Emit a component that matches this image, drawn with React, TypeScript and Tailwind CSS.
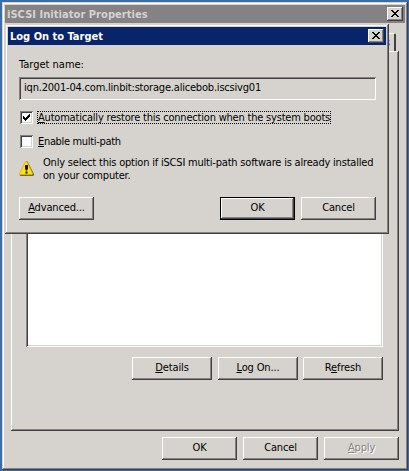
import type { ReactNode } from 'react';

const RAISED =
  'shadow-[inset_-1px_-1px_0_#424142,inset_1px_1px_0_#ffffff,inset_-2px_-2px_0_#848284]';
const FRAME =
  'shadow-[inset_-1px_-1px_0_#424142,inset_1px_1px_0_#d6d3ce,inset_-2px_-2px_0_#848284,inset_2px_2px_0_#ffffff]';
const SUNKEN =
  'shadow-[inset_1px_1px_0_#848284,inset_-1px_-1px_0_#ffffff,inset_2px_2px_0_#424142,inset_-2px_-2px_0_#d6d3ce]';

function Button({ children, className = '' }: { children: ReactNode; className?: string }) {
  return (
    <button className={`h-[23px] shrink-0 bg-[#d6d3ce] pb-px text-center leading-[20px] tracking-[-0.15px] ${RAISED} ${className}`}>
      {children}
    </button>
  );
}

function Close() {
  return (
    <button className={`flex h-[14px] w-4 items-start justify-center bg-[#d6d3ce] pt-[3px] ${RAISED}`} aria-label="Close">
      <svg width="8" height="7" viewBox="0 0 8 7" shapeRendering="crispEdges">
        <path d="M0 0h2v1h1v1h2V1h1V0h2v1H7v1H6v1H5v1h1v1h1v1h1v1H6V6H5V5H3v1H2v1H0V6h1V5h1V4h1V3H2V2H1V1H0z" fill="#000" />
      </svg>
    </button>
  );
}

function Checkbox({ checked = false }: { checked?: boolean }) {
  return (
    <span className={`block h-[13px] w-[13px] shrink-0 bg-white p-[3px] ${SUNKEN}`}>
      {checked && (
        <svg width="7" height="7" viewBox="0 0 7 7" shapeRendering="crispEdges" className="block">
          <path d="M0 2h1v1h1v1h1V3h1V2h1V1h1V0h1v3H6v1H5v1H4v1H3v1H2V6H1V5H0z" fill="#000" />
        </svg>
      )}
    </span>
  );
}

function Warning() {
  return (
    <svg width="15" height="15" viewBox="0 0 15 15" className="block">
      <path d="M7 .3h1.5L15 13v1.2l-.8.8H1.5L.5 14z" fill="#756b31" />
      <path d="M6.6.6h1.2L13.6 12.6l-.7.9H1.1l-.6-.9z" fill="#ffe600" stroke="#dfad00" strokeWidth=".7" />
      <path d="M6 4h3v3.5L8.2 9.5H6.8L6 7.5zM6.5 10.5h2v2h-2z" fill="#111052" />
    </svg>
  );
}

export default function App() {
  return (
    <div className="relative h-[471px] w-[409px] overflow-hidden bg-[#3a6ea5] pl-0.5 pt-0.5 font-['DejaVu_Sans_Condensed','DejaVu_Sans',sans-serif] text-[11px] leading-[13px] text-black">
      <div className={`flex h-[468px] w-[406px] flex-col bg-[#d6d3ce] p-[3px] ${FRAME}`}>
        <div className="flex h-[18px] shrink-0 items-center justify-between bg-[#848284] pl-0.5 pr-0.5 font-bold text-[#d6d3ce]">
          <span className="whitespace-nowrap tracking-[0.05px]">iSCSI Initiator Properties</span>
          <Close />
        </div>
        <div className="flex h-7 shrink-0 justify-end pr-[9px] pt-2.5">
          <div className="flex h-[18px] w-20 items-center justify-end rounded-t-[2px] border-r-2 border-t border-r-[#424142] border-t-white pr-1">s</div>
        </div>
        <div className={`ml-1.5 flex h-[380px] w-[388px] shrink-0 flex-col pl-[15px] pr-4 ${RAISED}`}>
          <div className={`h-[296px] shrink-0 bg-white ${SUNKEN}`} />
          <div className="mt-2.5 flex justify-end">
            <Button className="mr-1.5 w-[80px]"><u>D</u>etails</Button>
            <Button className="mr-[5px] w-[80px]"><u>L</u>og On...</Button>
            <Button className="w-[80px]">R<u>e</u>fresh</Button>
          </div>
        </div>
        <div className="mt-1.5 flex justify-end gap-1.5 pr-1.5">
          <Button className="w-[75px]">OK</Button>
          <Button className="w-[75px]">Cancel</Button>
          <Button className="w-[75px] text-[#848284] [text-shadow:1px_1px_0_#fff]"><u>A</u>pply</Button>
        </div>
      </div>

      <div className={`absolute left-[5px] top-6 flex h-[210px] w-[384px] flex-col bg-[#d6d3ce] p-[3px] ${FRAME}`}>
        <div className="flex h-[18px] shrink-0 items-center justify-between bg-[#08246b] px-0.5 font-bold text-white">
          <span className="whitespace-nowrap">Log On to Target</span>
          <Close />
        </div>
        <div className="flex flex-col pl-[11px] pr-2.5 pt-[13px]">
          <div className="whitespace-nowrap">Target name:</div>
          <div className={`mt-1.5 h-[23px] whitespace-nowrap pl-[5px] pt-[4px] tracking-[-0.2px] ${SUNKEN}`}>
            iqn.2001-04.com.linbit:storage.alicebob.iscsivg01
          </div>
          <div className="mt-[11px] flex h-[13px] pl-px">
            <Checkbox checked />
            <span className="ml-1 block h-[13px] w-[294px] whitespace-nowrap pl-px leading-[13px] tracking-[-0.2px] outline-1 -outline-offset-1 outline-dotted outline-black">
              <u>A</u>utomatically restore this connection when the system boots
            </span>
          </div>
          <div className="mt-[11px] flex h-[13px] pl-px">
            <Checkbox />
            <span className="ml-[5px] whitespace-nowrap tracking-[-0.33px]"><u>E</u>nable multi-path</span>
          </div>
          <div className="mt-2 flex h-[26px]">
            <div className="w-6 shrink-0 pt-[5px]"><Warning /></div>
            <div className="whitespace-nowrap tracking-[-0.2px]">
              <div>Only select this option if iSCSI multi-path software is already installed</div>
              <div>on your computer.</div>
            </div>
          </div>
          <div className="mt-[15px] flex">
            <Button className="w-[75px]"><u>A</u>dvanced...</Button>
            <Button className="ml-[126px] w-[75px] border border-black leading-[18px]">OK</Button>
            <Button className="ml-1.5 w-[75px]">Cancel</Button>
          </div>
        </div>
      </div>
    </div>
  );
}
